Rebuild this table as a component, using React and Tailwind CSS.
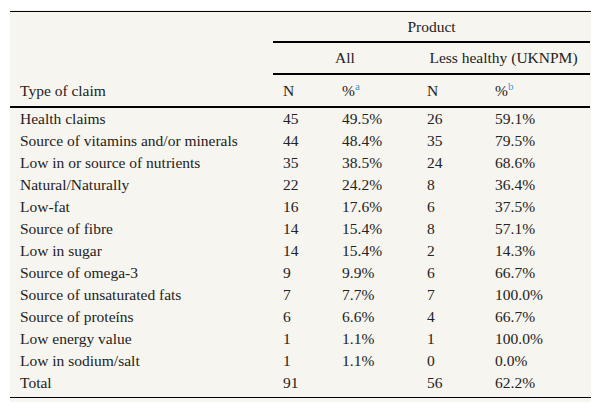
import React from "react";

const rows = [
  ["Health claims", "45", "49.5%", "26", "59.1%"],
  ["Source of vitamins and/or minerals", "44", "48.4%", "35", "79.5%"],
  ["Low in or source of nutrients", "35", "38.5%", "24", "68.6%"],
  ["Natural/Naturally", "22", "24.2%", "8", "36.4%"],
  ["Low-fat", "16", "17.6%", "6", "37.5%"],
  ["Source of fibre", "14", "15.4%", "8", "57.1%"],
  ["Low in sugar", "14", "15.4%", "2", "14.3%"],
  ["Source of omega-3", "9", "9.9%", "6", "66.7%"],
  ["Source of unsaturated fats", "7", "7.7%", "7", "100.0%"],
  ["Source of proteíns", "6", "6.6%", "4", "66.7%"],
  ["Low energy value", "1", "1.1%", "1", "100.0%"],
  ["Low in sodium/salt", "1", "1.1%", "0", "0.0%"],
  ["Total", "91", "", "56", "62.2%"],
];

export default function App() {
  return (
    <div className="w-[602px] h-[411px] bg-white pt-[10px] pl-[10px]">
      <div
        className="w-[581px] bg-[#f7f5ef] pt-[1px] pb-[4px] text-[15.5px] leading-none text-[#222]"
        style={{ fontFamily: '"Liberation Serif", "Times New Roman", serif' }}
      >
        <div className="border-t border-black grid grid-cols-[263px_59px_85px_68px_105px] border-b border-b-black">
          <div className="h-[31px]" />
          <div className="col-span-4 h-[31px] flex items-center justify-center border-b-2 border-black">
            Product
          </div>
          <div className="h-[32px]" />
          <div className="col-span-2 h-[32px] flex items-center justify-center border-b-2 border-black">
            All
          </div>
          <div className="col-span-2 h-[32px] flex items-center justify-center border-b-2 border-black">
            Less healthy (UKNPM)
          </div>
          <div className="col-span-5 grid grid-cols-[263px_59px_85px_68px_105px] h-[33px] border-b-2 border-black items-center">
            <div className="pl-[10px]">Type of claim</div>
            <div className="pl-[10px]">N</div>
            <div className="pl-[10px]">
              %<span className="relative top-[-6px] text-[11px] text-[#3b9ad6]">a</span>
            </div>
            <div className="pl-[10px]">N</div>
            <div className="pl-[10px]">
              %<span className="relative top-[-6px] text-[11px] text-[#3b9ad6]">b</span>
            </div>
          </div>
          {rows.map((r, i) => (
            <React.Fragment key={i}>
              {r.map((c, j) => (
                <div key={j} className="h-[22px] flex items-center pl-[10px] whitespace-nowrap">
                  {c}
                </div>
              ))}
            </React.Fragment>
          ))}
          <div className="col-span-5 h-[3px]" />
        </div>
      </div>
    </div>
  );
}
